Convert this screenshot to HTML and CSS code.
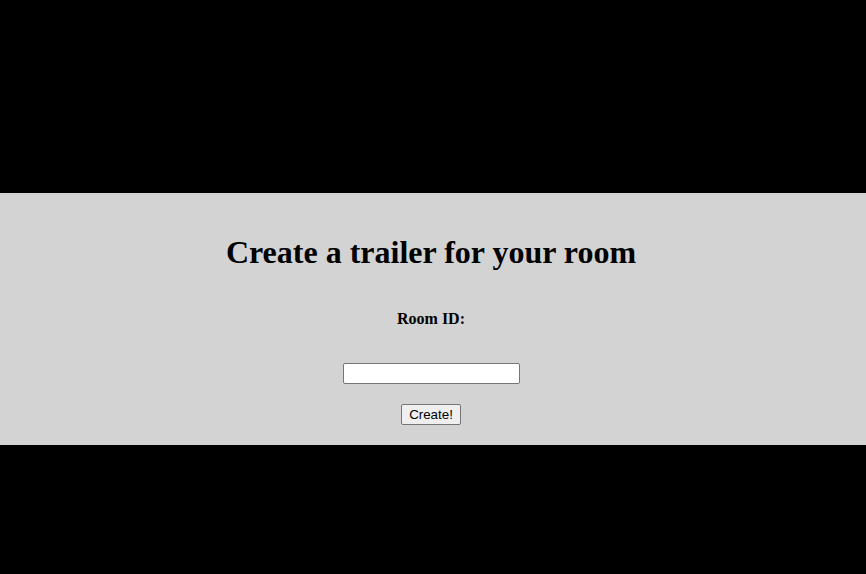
FILE: index.html
```html
<!DOCTYPE html>
<html>
<head>
<meta charset="utf-8">
<link rel="stylesheet" href="styles.css">
</head>
<body>
<div class="band">
  <h1 class="title">Create a trailer for your room</h1>
  <form class="form">
    <label class="label" for="room">Room ID:</label>
    <input class="field" type="text" id="room">
    <button class="btn" type="button">Create!</button>
  </form>
</div>
</body>
</html>
```
FILE: styles.css
```css
html, body {
  margin: 0;
  padding: 0;
  background: #000;
  height: 100%;
}
body {
  font-family: "Liberation Serif", "Times New Roman", serif;
  padding-top: 193px;
  box-sizing: border-box;
}
.band {
  background: #d3d3d3;
  height: 252px;
  box-sizing: border-box;
  padding: 41px 4px 0 0;
  text-align: center;
}
.title {
  font-size: 32px;
  font-weight: bold;
  margin: 0;
  line-height: 37px;
}
.form {
  display: flex;
  flex-direction: column;
  align-items: center;
  margin-top: 39px;
}
.label {
  font-weight: bold;
  font-size: 16px;
  line-height: 18px;
}
.field {
  margin-top: 35px;
  width: 177px;
  height: 21px;
  box-sizing: border-box;
  font-family: "Liberation Sans", Arial, sans-serif;
  font-size: 13.33px;
  border: 1px solid #767676;
  border-radius: 2px;
  background: #fff;
  padding: 1px 2px;
}
.btn {
  margin-top: 20px;
  width: 60px;
  height: 21px;
  box-sizing: border-box;
  font-family: "Liberation Sans", Arial, sans-serif;
  font-size: 13.33px;
  color: #000;
  background: #efefef;
  border: 1px solid #767676;
  border-radius: 2px;
  padding: 1px 6px;
}
```
